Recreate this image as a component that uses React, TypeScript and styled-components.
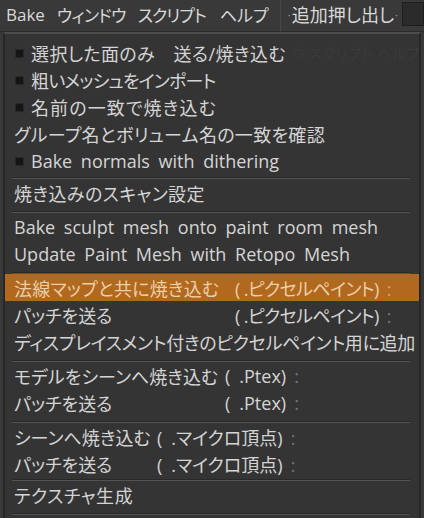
import React from 'react';
import styled, { createGlobalStyle } from 'styled-components';

const Global = createGlobalStyle`
  html, body { margin: 0; padding: 0; background: #393939; }
  body {
    width: 424px; height: 518px; overflow: hidden;
    font-family: "Open Sans", "Noto Sans CJK JP", sans-serif;
    font-feature-settings: "palt";
  }
`;

const Page = styled.div`
  position: relative;
  width: 424px;
  height: 518px;
  background: #393939;
  overflow: hidden;
  display: flex;
  flex-direction: column;
`;

const MenuBar = styled.div`
  height: 32px;
  box-sizing: border-box;
  display: flex;
  align-items: center;
  padding: 0 0 3px 6px;
  border-bottom: 1px solid #2a2a2a;
  color: #d8d8d8;
  font-size: 17px;
`;

const MenuTitle = styled.span<{ $gap: number; $track?: number }>`
  margin-right: ${(p) => p.$gap}px;
  letter-spacing: ${(p) => p.$track ?? 0}px;
  white-space: nowrap;
`;

const BarDivider = styled.div`
  width: 1px;
  height: 31px;
  margin-bottom: -3px;
  background: #272727;
  border-right: 1px solid #474747;
  margin-right: 6px;
`;

const ToolLabel = styled.span`
  font-size: 18px;
  white-space: nowrap;
`;

const Dot = styled.span`
  color: #a0a0a0;
  font-size: 11px;
  margin: 0 1px;
  vertical-align: 3px;
`;

const ToolBox = styled.div`
  margin: 0 0 0 3px;
  width: 20px;
  height: 22px;
  background: #2b2b2b;
  border: 1px solid #1e1e1e;
  flex-shrink: 0;
`;

const Dropdown = styled.div`
  position: relative;
  margin-left: 3px;
  width: 414px;
  flex: 1;
  background: #343434;
  border-top: 2px solid #4d4d4d;
  border-left: 2px solid #272727;
  border-right: 2px solid #262626;
  color: #d4d4d4;
  font-size: 18px;
`;

const Ghost = styled.div`
  position: absolute;
  top: 8px;
  left: 286px;
  color: rgba(255, 255, 255, 0.045);
  font-size: 15px;
  white-space: nowrap;
  pointer-events: none;
`;

const Group = styled.div<{ $top?: number; $bottom?: number }>`
  padding-top: ${(p) => p.$top ?? 0}px;
  padding-bottom: ${(p) => p.$bottom ?? 5}px;
`;

const Separator = styled.div`
  margin: 0 9px 0 7px;
  border-top: 1px solid #282828;
  border-bottom: 1px solid #535353;
`;

const Row = styled.div<{ $active?: boolean }>`
  height: 27px;
  display: flex;
  align-items: center;
  padding-left: 9px;
  white-space: nowrap;
  background: ${(p) => (p.$active ? '#b1691f' : 'transparent')};
  color: ${(p) => (p.$active ? '#ebcfa8' : '#d4d4d4')};
`;

const Bullet = styled.span`
  width: 9px;
  height: 9px;
  background: #151515;
  border: 1px solid #282828;
  box-sizing: border-box;
  margin: 2px 7px 0 1px;
  flex-shrink: 0;
`;

const Latin = styled.span`
  word-spacing: 4px;
`;

const Label = styled.span<{ $width?: number; $track?: number }>`
  display: inline-block;
  width: ${(p) => (p.$width ? `${p.$width}px` : 'auto')};
  letter-spacing: ${(p) => p.$track ?? 0}px;
`;

const Suffix = styled.span<{ $track?: number }>`
  letter-spacing: ${(p) => p.$track ?? 0}px;
`;

const Dim = styled.span<{ $active?: boolean }>`
  margin-left: 8px;
  color: ${(p) => (p.$active ? '#d8a062' : '#767676')};
`;

type Item = {
  text: string;
  bullet?: boolean;
  latin?: boolean;
  suffix?: string;
  suffixTrack?: number;
  col?: number;
  track?: number;
  active?: boolean;
};

type GroupDef = { top?: number; bottom?: number; items: Item[] };

const groups: GroupDef[] = [
  {
    top: 5,
    bottom: 3,
    items: [
      { text: '選択した面のみ　送る/焼き込む', bullet: true, track: 0.4 },
      { text: '粗いメッシュをインポート', bullet: true, track: -0.8 },
      { text: '名前の一致で焼き込む', bullet: true, track: 1.1 },
      { text: 'グループ名とボリューム名の一致を確認', track: 0.3 },
      { text: 'Bake normals with dithering', bullet: true, latin: true },
    ],
  },
  { items: [{ text: '焼き込みのスキャン設定', track: 0.4 }] },
  {
    items: [
      { text: 'Bake sculpt mesh onto paint room mesh', latin: true },
      { text: 'Update Paint Mesh with Retopo Mesh', latin: true },
    ],
  },
  {
    items: [
      { text: '法線マップと共に焼き込む', suffix: '( .ピクセルペイント)', suffixTrack: -0.6, col: 221, track: 0.2, active: true },
      { text: 'パッチを送る', suffix: '( .ピクセルペイント)', suffixTrack: -0.6, col: 221 },
      { text: 'ディスプレイスメント付きのピクセルペイント用に追加', track: -0.3 },
    ],
  },
  {
    items: [
      { text: 'モデルをシーンへ焼き込む', suffix: '(\u2002.Ptex)', col: 211 },
      { text: 'パッチを送る', suffix: '(\u2002.Ptex)', col: 211 },
    ],
  },
  {
    bottom: 2,
    items: [
      { text: 'シーンへ焼き込む', suffix: '(\u2002.マイクロ頂点)', col: 143 },
      { text: 'パッチを送る', suffix: '(\u2002.マイクロ頂点)', col: 143 },
    ],
  },
  { items: [{ text: 'テクスチャ生成', track: 0.6 }] },
];

export default function App() {
  return (
    <Page>
      <Global />
      <MenuBar>
        <MenuTitle $gap={12}>Bake</MenuTitle>
        <MenuTitle $gap={12} $track={-0.7}>ウィンドウ</MenuTitle>
        <MenuTitle $gap={14} $track={-1}>スクリプト</MenuTitle>
        <MenuTitle $gap={11}>ヘルプ</MenuTitle>
        <BarDivider />
        <ToolLabel>
          <Dot>·</Dot>追加押し出し<Dot>·</Dot>
        </ToolLabel>
        <ToolBox />
      </MenuBar>
      <Dropdown>
        <Ghost>ウ スクリプト ヘルプ</Ghost>
        {groups.map((g, gi) => (
          <React.Fragment key={gi}>
            <Group $top={g.top} $bottom={g.bottom}>
              {g.items.map((it, i) => (
                <Row key={i} $active={it.active}>
                  {it.bullet && <Bullet />}
                  {it.latin ? (
                    <Latin>{it.text}</Latin>
                  ) : (
                    <Label $width={it.col} $track={it.track}>
                      {it.text}
                    </Label>
                  )}
                  {it.suffix && (
                    <Suffix $track={it.suffixTrack}>
                      {it.suffix}
                      <Dim $active={it.active}>:</Dim>
                    </Suffix>
                  )}
                </Row>
              ))}
            </Group>
            <Separator />
          </React.Fragment>
        ))}
      </Dropdown>
    </Page>
  );
}
